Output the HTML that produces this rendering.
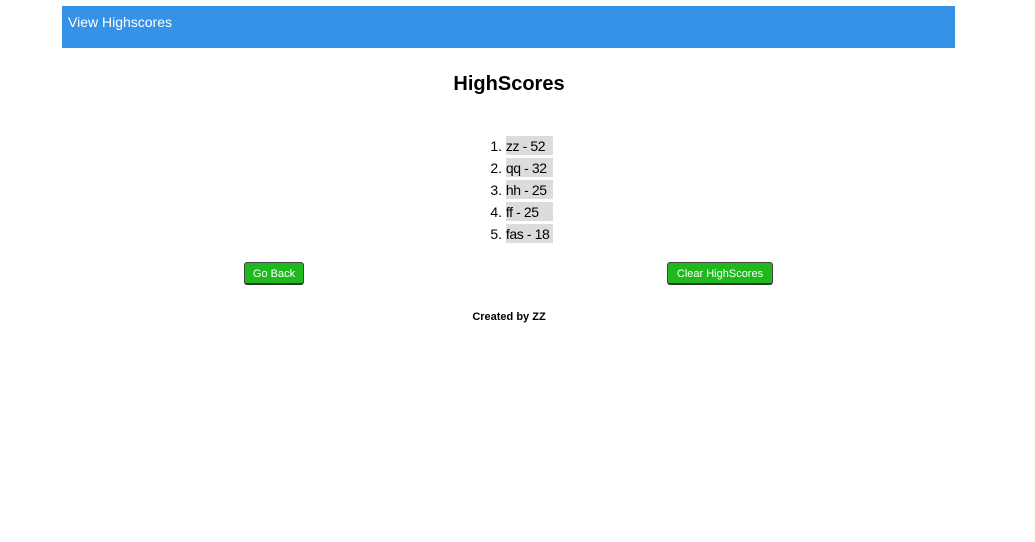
<!DOCTYPE html>
<html><head><style>
body{margin:0;background:#fff;font-family:"Liberation Sans",sans-serif;width:1035px;height:542px;position:relative;overflow:hidden}
.hdr{position:absolute;left:62px;top:6px;width:893px;height:42px;background:#3592e6;color:#fff;font-size:14px}
.hdr span{position:absolute;left:6px;top:8px}
h1{position:absolute;left:0;width:1018px;top:73px;margin:0;text-align:center;font-size:20px;font-weight:bold}
.li{position:absolute;left:483px;font-size:14px;height:19px;line-height:20px}
.li b{font-weight:normal;display:inline-block;width:19px;text-align:right}
.li i{font-style:normal;background:#dcdcdc;display:inline-block;width:47px;letter-spacing:-0.4px;height:19px}
.btn{position:absolute;top:262px;height:20px;background:#1db91d;color:#fff;font-size:11px;line-height:23px;text-align:center;border:1px solid #444;border-bottom:2px solid #333;border-radius:3px;box-sizing:content-box}
.cr{position:absolute;left:0;width:1018px;top:311px;text-align:center;font-size:11px;font-weight:bold}
</style></head><body>
<div class="hdr"><span>View Highscores</span></div>
<h1>HighScores</h1>
<div class="li" style="top:136px"><b>1.</b> <i>zz - 52</i></div>
<div class="li" style="top:158px"><b>2.</b> <i>qq - 32</i></div>
<div class="li" style="top:180px"><b>3.</b> <i>hh - 25</i></div>
<div class="li" style="top:202px"><b>4.</b> <i>ff - 25</i></div>
<div class="li" style="top:224px"><b>5.</b> <i>fas - 18</i></div>
<div class="btn" style="left:244px;width:58px">Go Back</div>
<div class="btn" style="left:667px;width:104px">Clear HighScores</div>
<div class="cr">Created by ZZ</div>
</body></html>
